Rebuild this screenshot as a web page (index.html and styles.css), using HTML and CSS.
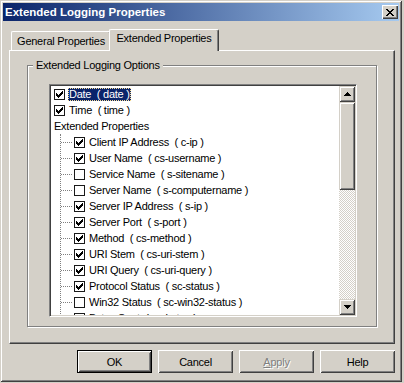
FILE: index.html
```html
<!DOCTYPE html>
<html lang="en">
<head>
  <meta charset="UTF-8" />
  <title>Extended Logging Properties</title>
  <link rel="stylesheet" href="styles.css">
</head>
<body>
  <svg class="defs" aria-hidden="true">
    <symbol id="tick" viewBox="0 0 7 7">
      <path d="M6 0h1v1h-1z M5 1h2v1h-2z M0 2h1v1h-1z M4 2h3v1h-3z M0 3h2v1h-2z M3 3h3v1h-3z M0 4h5v1h-5z M1 5h3v1h-3z M2 6h1v1h-1z" fill="#000"/>
    </symbol>
  </svg>

  <div class="window">
    <div class="titlebar">
      <span class="title">Extended Logging Properties</span>
      <span class="close">
        <svg width="8" height="7" viewBox="0 0 8 7" shape-rendering="crispEdges">
          <path d="M0 0h2v1h-2z M6 0h2v1h-2z M1 1h2v1h-2z M5 1h2v1h-2z M2 2h4v1h-4z M3 3h2v1h-2z M2 4h4v1h-4z M1 5h2v1h-2z M5 5h2v1h-2z M0 6h2v1h-2z M6 6h2v1h-2z" fill="#000"/>
        </svg>
      </span>
    </div>

    <div class="tabs">
      <div class="tab">General Properties</div>
      <div class="tab active">Extended Properties</div>
    </div>

    <div class="panel">
      <fieldset class="group">
        <legend>Extended Logging Options</legend>
        <div class="listbox">
          <div class="tree">
            <div class="row"><span class="check"><svg><use href="#tick"/></svg></span><span class="label selected">Date  ( date )</span></div>
            <div class="row"><span class="check"><svg><use href="#tick"/></svg></span><span class="label">Time  ( time )</span></div>
            <div class="row plain"><span class="label">Extended Properties</span></div>
            <div class="children">
              <div class="row"><span class="check"><svg><use href="#tick"/></svg></span><span class="label">Client IP Address  ( c-ip )</span></div>
              <div class="row"><span class="check"><svg><use href="#tick"/></svg></span><span class="label">User Name  ( cs-username )</span></div>
              <div class="row"><span class="check"></span><span class="label">Service Name  ( s-sitename )</span></div>
              <div class="row"><span class="check"></span><span class="label">Server Name  ( s-computername )</span></div>
              <div class="row"><span class="check"><svg><use href="#tick"/></svg></span><span class="label">Server IP Address  ( s-ip )</span></div>
              <div class="row"><span class="check"><svg><use href="#tick"/></svg></span><span class="label">Server Port  ( s-port )</span></div>
              <div class="row"><span class="check"><svg><use href="#tick"/></svg></span><span class="label">Method  ( cs-method )</span></div>
              <div class="row"><span class="check"><svg><use href="#tick"/></svg></span><span class="label">URI Stem  ( cs-uri-stem )</span></div>
              <div class="row"><span class="check"><svg><use href="#tick"/></svg></span><span class="label">URI Query  ( cs-uri-query )</span></div>
              <div class="row"><span class="check"><svg><use href="#tick"/></svg></span><span class="label">Protocol Status  ( sc-status )</span></div>
              <div class="row"><span class="check"></span><span class="label">Win32 Status  ( sc-win32-status )</span></div>
              <div class="row"><span class="check"></span><span class="label">Bytes Sent  ( sc-bytes )</span></div>
            </div>
          </div>
          <div class="scrollbar">
            <div class="sb-btn">
              <svg width="7" height="4" viewBox="0 0 7 4" shape-rendering="crispEdges"><path d="M3 0h1v1h1v1h1v1h1v1h-7v-1h1v-1h1v-1h1z" fill="#000"/></svg>
            </div>
            <div class="sb-thumb"></div>
            <div class="sb-track"></div>
            <div class="sb-btn">
              <svg width="7" height="4" viewBox="0 0 7 4" shape-rendering="crispEdges"><path d="M0 0h7v1h-1v1h-1v1h-1v1h-1v-1h-1v-1h-1v-1h-1z" fill="#000"/></svg>
            </div>
          </div>
        </div>
      </fieldset>
    </div>

    <div class="buttons">
      <div class="btn default">OK</div>
      <div class="btn">Cancel</div>
      <div class="btn disabled"><span><u>A</u>pply</span></div>
      <div class="btn">Help</div>
    </div>
  </div>
</body>
</html>
```

FILE: styles.css
```css
body {
  margin: 0;
  background: #d4d0c8;
  font-family: 'Liberation Sans', Arial, sans-serif;
  font-size: 11px;
  letter-spacing: -0.25px;
  color: #000;
}

.defs {
  position: absolute;
  width: 0;
  height: 0;
}

.window {
  width: 402px;
  height: 382px;
  box-sizing: border-box;
  padding: 3px;
  display: flex;
  flex-direction: column;
  box-shadow: inset 1px 1px #d4d0c8, inset -1px -1px #404040,
              inset 2px 2px #fff, inset -2px -2px #808080;
}

/* title bar */
.titlebar {
  height: 18px;
  flex: none;
  display: flex;
  align-items: center;
  justify-content: space-between;
  padding-left: 2px;
  background: linear-gradient(to right, #0a246a, #a6caf0);
}

.title {
  color: #fff;
  font-weight: bold;
  font-size: 11.5px;
  letter-spacing: 0;
}

.close {
  width: 16px;
  height: 14px;
  margin-right: 1px;
  display: flex;
  align-items: center;
  justify-content: center;
  background: #d4d0c8;
  box-shadow: inset 1px 1px #fff, inset -1px -1px #404040, inset -2px -2px #808080;
}

/* tabs */
.tabs {
  height: 21px;
  flex: none;
  display: flex;
  align-items: flex-end;
  margin: 8px 0 0 8px;
}

.tab {
  width: 100px;
  height: 19px;
  box-sizing: border-box;
  display: flex;
  align-items: center;
  justify-content: center;
  padding-bottom: 1px;
  border-top: 1px solid #fff;
  border-left: 1px solid #fff;
  border-right: 1px solid #404040;
  border-radius: 2px 2px 0 0;
  box-shadow: inset -1px 0 #808080;
}

.tab.active {
  width: 110px;
  height: 22px;
  margin-left: -2px;
  margin-bottom: -1px;
  padding-bottom: 6px;
  position: relative;
  z-index: 1;
  background: #d4d0c8;
}

/* panel */
.panel {
  height: 294px;
  flex: none;
  box-sizing: border-box;
  margin: 0 4px 0 6px;
  padding: 8px 0 0 17px;
  border: 1px solid #404040;
  border-top-color: #fff;
  border-left-color: #fff;
  box-shadow: inset -1px -1px #808080;
}

.group {
  width: 350px;
  height: 268px;
  box-sizing: border-box;
  margin: 0;
  padding: 0;
  border: 1px solid #808080;
  box-shadow: 1px 1px #fff, inset 1px 1px #fff;
}

.group legend {
  margin-left: 5px;
  padding: 0 3px;
  line-height: 13px;
  background: #d4d0c8;
}

.listbox {
  width: 308px;
  height: 233px;
  box-sizing: border-box;
  margin: 12px 0 0 21px;
  padding: 1px;
  display: flex;
  overflow: hidden;
  background: #fff;
  border: 1px solid #fff;
  border-top-color: #808080;
  border-left-color: #808080;
  box-shadow: inset 1px 1px #404040, inset -1px -1px #d4d0c8;
}

.tree {
  flex: 1;
  overflow: hidden;
}

.row {
  height: 16px;
  display: flex;
  align-items: center;
  padding-left: 3px;
  white-space: pre;
}

.row.plain {
  padding-left: 2px;
}

.check {
  width: 11px;
  height: 11px;
  flex: none;
  box-sizing: border-box;
  margin-right: 3px;
  display: flex;
  align-items: center;
  justify-content: center;
  border: 1px solid #1a1a1a;
  background: #fff;
}

.check svg {
  width: 7px;
  height: 7px;
}

.label {
  line-height: 13px;
  padding: 0 1px;
}

.label.selected {
  background: #0a246a;
  color: #fff;
  outline: 1px dotted #f5db95;
  outline-offset: -1px;
}

.children {
  margin-left: 9px;
  border-left: 1px dotted #808080;
}

.children .row {
  padding-left: 0;
}

.children .row::before {
  content: '';
  width: 11px;
  margin-right: 2px;
  border-top: 1px dotted #808080;
}

/* scrollbar */
.scrollbar {
  width: 16px;
  flex: none;
  display: flex;
  flex-direction: column;
}

.sb-btn,
.sb-thumb {
  background: #d4d0c8;
  box-shadow: inset 1px 1px #d4d0c8, inset -1px -1px #404040,
              inset 2px 2px #fff, inset -2px -2px #808080;
}

.sb-btn {
  height: 16px;
  flex: none;
  display: flex;
  align-items: center;
  justify-content: center;
}

.sb-thumb {
  height: 88px;
  flex: none;
}

.sb-track {
  flex: 1;
  background: repeating-conic-gradient(#d4d0c8 0 25%, #fff 0 50%) 0 0 / 2px 2px;
}

/* buttons */
.buttons {
  display: flex;
  justify-content: flex-end;
  gap: 6px;
  margin: 6px 4px 0 0;
}

.btn {
  width: 75px;
  height: 23px;
  box-sizing: border-box;
  display: flex;
  align-items: center;
  justify-content: center;
  box-shadow: inset 1px 1px #fff, inset -1px -1px #404040,
              inset 2px 2px #d4d0c8, inset -2px -2px #808080;
}

.btn.default {
  border: 1px solid #000;
}

.btn.disabled {
  color: #808080;
  text-shadow: 1px 1px #fff;
}
```
